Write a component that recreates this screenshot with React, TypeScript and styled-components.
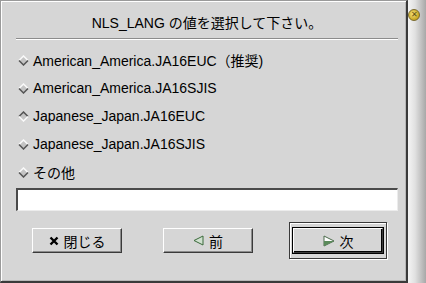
import styled, { createGlobalStyle } from "styled-components";

const GlobalStyle = createGlobalStyle`
  html, body {
    margin: 0;
    padding: 0;
    background: #d6d6d6;
  }
  body {
    font-family: "Liberation Sans", "Noto Sans CJK JP", sans-serif;
    color: #000;
  }
`;

const Window = styled.div`
  display: flex;
  width: 426px;
  height: 283px;
  overflow: hidden;
  background: #d6d6d6;
`;

const Panel = styled.div`
  box-sizing: border-box;
  width: 408px;
  height: 283px;
  display: flex;
  flex-direction: column;
  border-top: 1px solid #9a9a9a;
  border-left: 1px solid #9a9a9a;
  border-right: 2px solid #3a3a3a;
  border-bottom: 2px solid #3a3a3a;
  box-shadow: inset 1px 1px 0 #ffffff, inset -1px -1px 0 #b8b8b8;
  padding: 0 8px 0 15px;
`;

const Frame = styled.div`
  position: relative;
  flex: 1;
  background: linear-gradient(to right, #f4f4f4 0%, #e0e0e0 40%, #a8a8a8 100%);
`;

const CloseButton = styled.div`
  position: absolute;
  top: 9px;
  left: 0px;
  width: 10px;
  height: 10px;
  border-radius: 50%;
  background: radial-gradient(circle at 40% 40%, #f4e27a, #c8a520 70%, #6b5a10);
  border: 1px solid #7a6a2a;
  display: flex;
  align-items: center;
  justify-content: center;
  font-size: 8px;
  line-height: 1;
  color: #5a4a10;
`;

const Title = styled.div`
  height: 37px;
  display: flex;
  align-items: center;
  justify-content: center;
  font-size: 14px;
  padding-top: 4px;
  box-sizing: border-box;
`;

const Separator = styled.div`
  height: 0;
  border-top: 1px solid #8c8c8c;
  border-bottom: 1px solid #ffffff;
  margin: 0 0 6px 0;
`;

const RadioList = styled.div`
  display: flex;
  flex-direction: column;
`;

const RadioRow = styled.label`
  display: flex;
  align-items: center;
  height: 28px;
  font-size: 14px;
  gap: 4px;
  padding-left: 2px;
`;

const Field = styled.div`
  box-sizing: border-box;
  height: 23px;
  margin: 2px 0 0 0;
  background: #ffffff;
  border-top: 2px solid #4a4a4a;
  border-left: 2px solid #4a4a4a;
  border-right: 1px solid #ececec;
  border-bottom: 1px solid #ececec;
`;

const ButtonRow = styled.div`
  display: flex;
  align-items: center;
  padding: 11px 0 0 16px;
`;

const ButtonBox = styled.div<{ $default?: boolean; $gap: number }>`
  margin-left: ${(p) => p.$gap}px;
  padding: ${(p) => (p.$default ? "5px 3px" : "0")};
  border: ${(p) => (p.$default ? "1px solid #3a3a3a" : "none")};
  box-shadow: ${(p) => (p.$default ? "1px 1px 0 #ffffff, inset 1px 1px 0 #ffffff" : "none")};
`;

const Button = styled.button<{ $default?: boolean }>`
  box-sizing: border-box;
  width: 90px;
  height: 25px;
  display: flex;
  align-items: center;
  justify-content: center;
  gap: 5px;
  background: #d6d6d6;
  font-family: "Liberation Sans", "Noto Sans CJK JP", sans-serif;
  font-size: 14px;
  color: #000;
  padding: 0;
  border-top: 1px solid #ffffff;
  border-left: 1px solid #ffffff;
  border-right: 1px solid #3a3a3a;
  border-bottom: 1px solid #3a3a3a;
  box-shadow: ${(p) => (p.$default ? "0 0 0 1px #000, inset -1px -1px 0 #000" : "inset -1px -1px 0 #8c8c8c")};
`;

function Diamond({ selected }: { selected?: boolean }) {
  const dark = "#555";
  const light = "#fafafa";
  return (
    <svg width="11" height="11" viewBox="0 0 11 11">
      <polygon points="5.5,1 10,5.5 5.5,10 1,5.5" fill="#c4c4c4" />
      <polyline points="1,5.5 5.5,1 10,5.5" fill="none" stroke={selected ? dark : light} strokeWidth="1.5" />
      <polyline points="1,5.5 5.5,10 10,5.5" fill="none" stroke={selected ? light : dark} strokeWidth="1.5" />
    </svg>
  );
}

const options = [
  { label: "American_America.JA16EUC（推奨)" },
  { label: "American_America.JA16SJIS" },
  { label: "Japanese_Japan.JA16EUC", selected: true },
  { label: "Japanese_Japan.JA16SJIS" },
  { label: "その他" },
];

export default function App() {
  return (
    <>
      <GlobalStyle />
      <Window>
        <Panel>
          <Title>NLS_LANG の値を選択して下さい。</Title>
          <Separator />
          <RadioList>
            {options.map((o) => (
              <RadioRow key={o.label}>
                <Diamond selected={o.selected} />
                {o.label}
              </RadioRow>
            ))}
          </RadioList>
          <Field />
          <ButtonRow>
            <ButtonBox $gap={0}>
              <Button>
                <svg width="10" height="10" viewBox="0 0 10 10">
                  <path d="M1.5 1.5 L8.5 8.5 M8.5 1.5 L1.5 8.5" stroke="#000" strokeWidth="2.4" />
                </svg>
                閉じる
              </Button>
            </ButtonBox>
            <ButtonBox $gap={41}>
              <Button>
                <svg width="11" height="11" viewBox="0 0 11 11">
                  <polygon points="10,1 1,5.5 10,10" fill="#cfe0cf" stroke="#3a6a3a" strokeWidth="1" />
                </svg>
                前
              </Button>
            </ButtonBox>
            <ButtonBox $gap={36} $default>
              <Button $default>
                <svg width="12" height="12" viewBox="0 0 12 12">
                  <polygon points="1,1 11,6 1,11" fill="#ffffff" stroke="#4a6a4a" strokeWidth="1" />
                  <polygon points="1,6 11,6 1,11" fill="#5a8a5a" />
                </svg>
                次
              </Button>
            </ButtonBox>
          </ButtonRow>
        </Panel>
        <Frame>
          <CloseButton>✕</CloseButton>
        </Frame>
      </Window>
    </>
  );
}
